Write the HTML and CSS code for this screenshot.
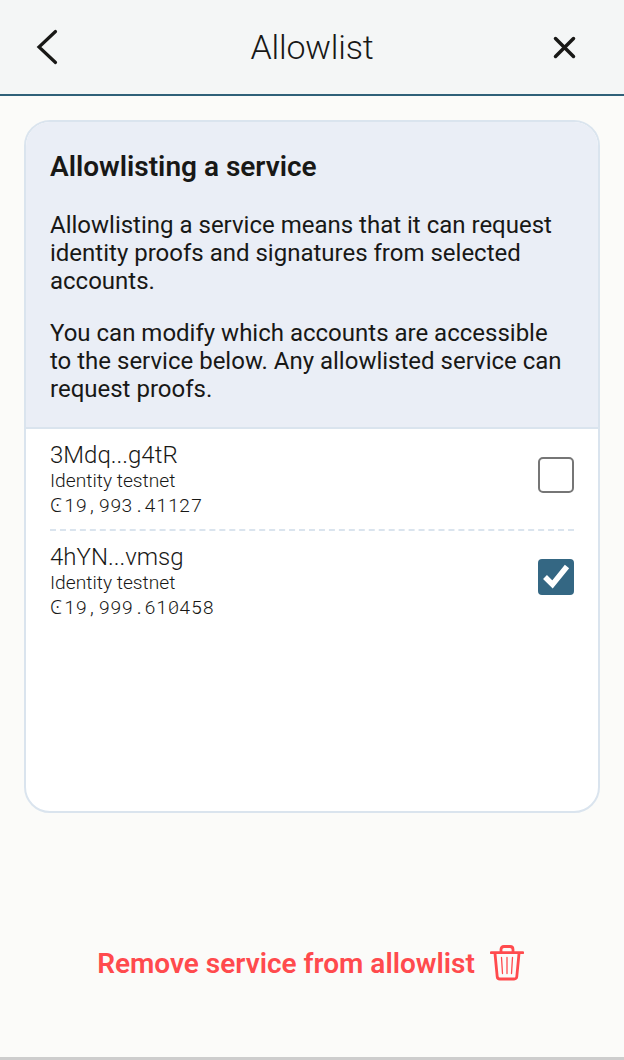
FILE: index.html
```
<!DOCTYPE html>
<html lang="en">
<head>
<meta charset="utf-8">
<title>Allowlist</title>
<link rel="stylesheet" href="styles.css">
</head>
<body>
<header class="topbar">
  <button class="icon-button" aria-label="Back"><svg width="24" height="36" viewBox="0 0 24 36"><path d="M20.500 2.500 4 18l16.500 15.500" fill="none" stroke="#181816" stroke-width="3.200" stroke-linecap="round"/></svg></button>
  <h1 class="title">Allowlist</h1>
  <button class="icon-button close" aria-label="Close"><svg width="24" height="24" viewBox="0 0 24 24"><path d="M3.500 3.500l18 18M21.500 3.500l-18 18" fill="none" stroke="#181816" stroke-width="3.500" stroke-linecap="round"/></svg></button>
</header>
<main class="content">
  <section class="card">
    <div class="intro">
      <h2 class="heading">Allowlisting a service</h2>
      <p class="text">Allowlisting a service means that it can request<br>identity proofs and signatures from selected<br>accounts.</p>
      <p class="text">You can modify which accounts are accessible<br>to the service below. Any allowlisted service can<br>request proofs.</p>
    </div>
    <ul class="accounts">
      <li class="account">
        <div><div class="name">3Mdq...g4tR</div><div class="identity">Identity testnet</div><div class="amount"><span class="symbol">Ͼ</span>19,993.41127</div></div>
        <span class="checkbox"></span>
      </li>
      <li class="account">
        <div><div class="name">4hYN...vmsg</div><div class="identity">Identity testnet</div><div class="amount"><span class="symbol">Ͼ</span>19,999.610458</div></div>
        <span class="checkbox checked"><svg width="36" height="36" viewBox="0 0 36 36"><path d="M7 18l7.500 7.500L29 7.500" fill="none" stroke="#fff" stroke-width="5.500"/></svg></span>
      </li>
    </ul>
  </section>
  <button class="remove"><span>Remove service from allowlist</span><svg width="34" height="36" viewBox="0 0 34 36"><g fill="none" stroke="#ff4a4d" stroke-linecap="round" stroke-linejoin="round"><path d="M1.200 7.600h31.600M11 7V4.500q0-3 3-3h6q3 0 3 3V7M5 8.500l2.200 23q.2 2.500 2.700 2.500h14.200q2.500 0 2.700-2.500l2.200-23" stroke-width="2.800"/><path d="M11.500 12.500l1 16M17 12.500v16M22.500 12.500l-1 16" stroke-width="1.300"/></g></svg></button>
</main>
</body>
</html>
```
FILE: styles.css
```
* { box-sizing: border-box; }
body { margin: 0; height: 1060px; background: #fbfbf9; color: #181816; font-family: Roboto, sans-serif; display: flex; flex-direction: column; border-bottom: 3px solid #cdcdcd; }
button { border: 0; padding: 0; background: none; font-family: inherit; }
svg { display: block; }
.topbar { height: 96px; flex: none; display: grid; grid-template-columns: 24px 1fr 24px; align-items: center; padding: 0 48px 0 35px; background: #f4f6f6; border-bottom: 2px solid #2f6179; }
.title { margin: 0; padding-left: 13px; text-align: center; font-size: 34px; font-weight: 300; letter-spacing: -0.2px; }
.content { flex: 1; display: flex; flex-direction: column; align-items: center; padding: 24px 24px 0; }
.card { width: 576px; height: 693px; border: 2px solid #dae4ee; border-radius: 26px; background: #fff; overflow: hidden; }
.intro { height: 307px; padding: 27px 24px 0; background: #eaeef6; border-bottom: 2px solid #dae4ee; }
.heading { margin: 0 0 26px; font-size: 28px; line-height: 36px; font-weight: 600; }
.text { margin: 0 0 24px; font-size: 24px; line-height: 28px; white-space: nowrap; }
.accounts { list-style: none; margin: 0; padding: 0 24px; }
.account { display: flex; justify-content: space-between; align-items: flex-start; height: 102px; padding-top: 12px; }
.account:first-child { border-bottom: 2px dashed #dae4ee; }
.name { font-size: 24px; line-height: 28px; font-weight: 300; }
.identity { font-size: 19.2px; line-height: 24px; font-weight: 300; }
.amount { display: flex; font-family: "Roboto Mono", "Liberation Mono", monospace; font-size: 19.2px; line-height: 24px; font-weight: 340; }
.symbol { width: 14px; font-family: "Noto Sans", "DejaVu Sans", sans-serif; font-weight: 300; }
.checkbox { width: 36px; height: 36px; margin-top: 16px; border: 2px solid #767676; border-radius: 5px; }
.checked { border: 0; background: #346783; border-radius: 4px; }
.remove { display: flex; align-items: center; gap: 15px; margin: 132px 3px 0 0; color: #ff4a4d; font-size: 28px; font-weight: 600; }
```
